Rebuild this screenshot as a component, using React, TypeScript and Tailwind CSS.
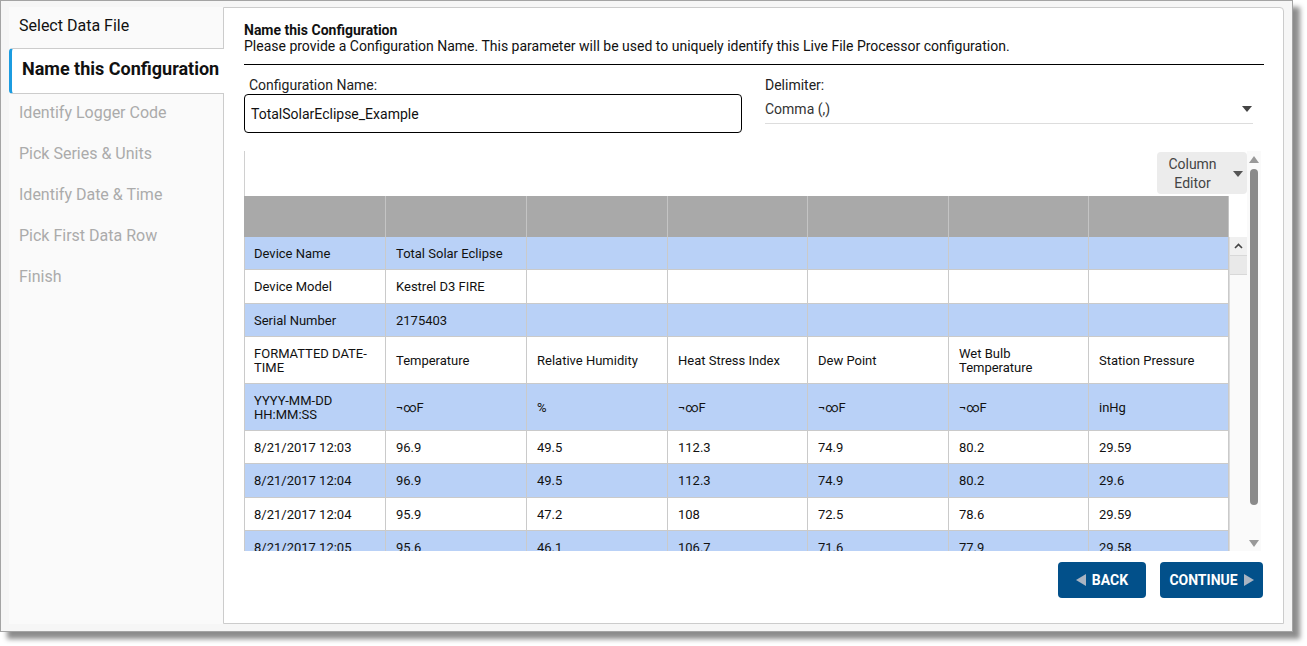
import React from 'react';

const steps = [
  'Identify Logger Code',
  'Pick Series & Units',
  'Identify Date & Time',
  'Pick First Data Row',
  'Finish',
];

const colWidths = [142, 141, 141, 140, 141, 140, 140];

type Row = { h: number; blue: boolean; cells: string[] };

const rows: Row[] = [
  { h: 33, blue: true, cells: ['Device Name', 'Total Solar Eclipse', '', '', '', '', ''] },
  { h: 34, blue: false, cells: ['Device Model', 'Kestrel D3 FIRE', '', '', '', '', ''] },
  { h: 33, blue: true, cells: ['Serial Number', '2175403', '', '', '', '', ''] },
  {
    h: 47,
    blue: false,
    cells: ['FORMATTED DATE-\nTIME', 'Temperature', 'Relative Humidity', 'Heat Stress Index', 'Dew Point', 'Wet Bulb\nTemperature', 'Station Pressure'],
  },
  { h: 47, blue: true, cells: ['YYYY-MM-DD\nHH:MM:SS', '¬∞F', '%', '¬∞F', '¬∞F', '¬∞F', 'inHg'] },
  { h: 33, blue: false, cells: ['8/21/2017 12:03', '96.9', '49.5', '112.3', '74.9', '80.2', '29.59'] },
  { h: 34, blue: true, cells: ['8/21/2017 12:04', '96.9', '49.5', '112.3', '74.9', '80.2', '29.6'] },
  { h: 33, blue: false, cells: ['8/21/2017 12:04', '95.9', '47.2', '108', '72.5', '78.6', '29.59'] },
  { h: 34, blue: true, cells: ['8/21/2017 12:05', '95.6', '46.1', '106.7', '71.6', '77.9', '29.58'] },
];

const Caret = ({ className = '' }: { className?: string }) => (
  <svg width="10" height="6" viewBox="0 0 10 6" className={className}>
    <polygon points="0,0 10,0 5,6" fill="currentColor" />
  </svg>
);

const DataTable = () => (
  <div className="mt-[18px] w-[1017px] h-[400px] flex">
    {/* grid + toolbar */}
    <div className="w-[1003px] flex flex-col">
      <div className="h-[45px] border-l border-[#d0d0d0] bg-white flex justify-end items-start pt-px">
        <div className="w-[90px] h-[42px] bg-[#ececec] rounded-[4px] flex items-center text-[14px] leading-[19px] text-[#444]">
          <div className="flex-1 text-center pr-[5px] pt-[2px]">
            Column
            <br />
            Editor
          </div>
          <Caret className="text-[#555] mr-[4px] mt-[2px]" />
        </div>
      </div>
      <div className="h-[41px] flex">
        {colWidths.map((w, i) => (
          <div key={i} style={{ width: w }} className="h-full bg-[#a9a9a9] border-r border-[#c4c4c4]" />
        ))}
        <div className="flex-1 bg-white" />
      </div>
      <div className="flex-1 flex overflow-hidden">
        <div className="w-[985px] overflow-hidden">
          {rows.map((r, ri) => (
            <div
              key={ri}
              style={{ height: r.h }}
              className={`flex border-b border-[#cacaca] ${r.blue ? 'bg-[#b9d1f7]' : 'bg-white'}`}
            >
              {r.cells.map((c, ci) => (
                <div
                  key={ci}
                  style={{ width: colWidths[ci] }}
                  className={`h-full shrink-0 border-r border-[#cacaca] pt-px flex items-center text-[13px] leading-[14px] text-[#111] whitespace-pre ${ci === 0 ? 'border-l pl-[9px]' : 'pl-[10px]'}`}
                >
                  {c}
                </div>
              ))}
            </div>
          ))}
        </div>
        <div className="w-[18px] flex flex-col bg-[#fafafa] border-l border-[#dcdcdc]">
          <div className="h-[19px] bg-[#f0f0f0] border-b border-[#d8d8d8] flex items-center justify-center">
            <svg width="9" height="6" viewBox="0 0 9 6">
              <polyline points="1,5 4.5,1.5 8,5" fill="none" stroke="#444" strokeWidth="1.6" />
            </svg>
          </div>
          <div className="h-[19px] bg-[#e9e9e9] border-b border-[#d8d8d8]" />
        </div>
      </div>
    </div>
    {/* outer scrollbar */}
    <div className="w-[14px] bg-[#fafafa] flex flex-col items-center">
      <svg width="10" height="7" viewBox="0 0 10 7" className="mt-[5px]">
        <polygon points="0,7 10,7 5,0" fill="#999" />
      </svg>
      <div className="w-[8px] h-[336px] mt-[6px] bg-[#8a8a8a] rounded-full" />
      <div className="flex-1" />
      <svg width="10" height="7" viewBox="0 0 10 7" className="mb-[4px]">
        <polygon points="0,0 10,0 5,7" fill="#999" />
      </svg>
    </div>
  </div>
);

export default function App() {
  return (
    <div className="w-[1307px] h-[646px] bg-white font-['Roboto',_'Liberation_Sans',_sans-serif]">
      <div className="w-[1293px] h-[632px] border border-[#a4a4a4] bg-[#f6f6f6] shadow-[7px_7px_5px_rgba(0,0,0,0.45)] flex pt-[6px] pl-[8px] pr-[8px] pb-[7px]">
        {/* sidebar */}
        <div className="w-[214px] shrink-0 bg-[#fafafa] flex flex-col">
          <div className="h-[41px] pl-[10px] pt-[7px] text-[16px] leading-[24px] text-[#111]">Select Data File</div>
          <div className="relative z-10 w-[215px] h-[46px] bg-white border-y border-l-[3px] border-y-[#cccccc] border-l-[#1c9ce0] rounded-l-[4px] pl-[10px] pt-[8px] text-[18px] leading-[24px] font-bold text-[#111] whitespace-nowrap">
            Name this Configuration
          </div>
          {steps.map((s) => (
            <div key={s} className="h-[41px] pl-[10px] pt-[7px] text-[16px] leading-[24px] text-[#ababab]">
              {s}
            </div>
          ))}
        </div>
        {/* main panel */}
        <div className="flex-1 bg-white border border-[#cccccc] rounded-tr-[4px] pl-[20px] pr-[19px] pt-[14px]">
          <div className="border-b border-black pb-[10px] text-[14px] leading-[16px] text-[#111]">
            <div className="font-bold">Name this Configuration</div>
            <div>Please provide a Configuration Name. This parameter will be used to uniquely identify this Live File Processor configuration.</div>
          </div>
          <div className="mt-[12px] flex text-[14px] leading-[16px] text-[#222]">
            <div className="w-[498px]">
              <div className="pl-[5px]">Configuration Name:</div>
              <div className="mt-px h-[39px] border border-black rounded-[4px] pl-[6px] flex items-center text-[#111]">
                TotalSolarEclipse_Example
              </div>
            </div>
            <div className="ml-[23px] w-[488px]">
              <div>Delimiter:</div>
              <div className="mt-px h-[30px] border-b border-[#dddddd] flex items-center justify-between text-[#333]">
                <span>Comma (,)</span>
                <Caret className="text-[#444] mr-[1px]" />
              </div>
            </div>
          </div>
          <DataTable />
          <div className="mt-[11px] w-[1019px] flex justify-end gap-[14px]">
            <button className="w-[88px] h-[36px] bg-[#02508a] rounded-[4px] flex items-center justify-center gap-[6px] text-white text-[14px] font-bold">
              <svg width="10" height="12" viewBox="0 0 10 12">
                <polygon points="10,0 10,12 0,6" fill="#aab4c2" />
              </svg>
              BACK
            </button>
            <button className="w-[103px] h-[36px] bg-[#02508a] rounded-[4px] flex items-center justify-center gap-[6px] text-white text-[14px] font-bold">
              CONTINUE
              <svg width="10" height="12" viewBox="0 0 10 12">
                <polygon points="0,0 0,12 10,6" fill="#aab4c2" />
              </svg>
            </button>
          </div>
        </div>
      </div>
    </div>
  );
}
